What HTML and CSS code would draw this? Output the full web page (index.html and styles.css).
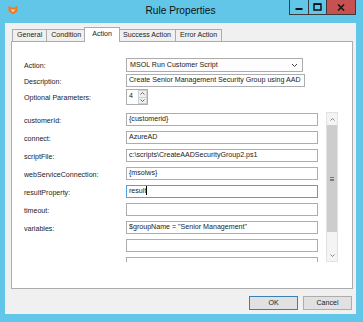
FILE: index.html
```html
<!DOCTYPE html>
<html lang="en">
<head>
    <meta charset="UTF-8">
    <title>Rule Properties</title>
    <link rel="stylesheet" href="styles.css">
</head>
<body>
    <div class="window">
        <div class="titlebar">
            <svg class="app-icon" width="10" height="10" viewBox="0 0 10 10">
                <path d="M0.5 0.5 L3.2 2.6 H6.8 L9.5 0.5 V6 L5 9.6 L0.5 6 Z" fill="#f07a22"/>
                <path d="M2.6 4.4 H7.4 L5 7.2 Z" fill="#fbd0a8"/>
            </svg>
            <div class="title">Rule Properties</div>
            <div class="caption-buttons">
                <span class="cap">
                    <svg width="8" height="8" viewBox="0 0 8 8"><rect x="0.5" y="5" width="7" height="2" fill="#111"/></svg>
                </span>
                <span class="cap">
                    <svg width="9" height="8" viewBox="0 0 9 8"><rect x="1" y="1" width="7" height="6" fill="none" stroke="#111" stroke-width="1.5"/><rect x="1" y="0.5" width="7" height="1.5" fill="#111"/></svg>
                </span>
                <span class="cap close">
                    <svg width="8" height="7" viewBox="0 0 8 7"><path d="M1 0.5 L7 6.5 M7 0.5 L1 6.5" stroke="#1a1a1a" stroke-width="1.6"/></svg>
                </span>
            </div>
        </div>

        <div class="client">
            <div class="tabs">
                <div class="tab">General</div>
                <div class="tab">Condition</div>
                <div class="tab active">Action</div>
                <div class="tab">Success Action</div>
                <div class="tab">Error Action</div>
            </div>

            <div class="panel">
                <div class="form">
                    <label>Action:</label>
                    <div class="combo">
                        <span>MSOL Run Customer Script</span>
                        <svg width="7" height="5" viewBox="0 0 7 5"><path d="M1 1 L3.5 3.5 L6 1" fill="none" stroke="#444" stroke-width="1"/></svg>
                    </div>

                    <label>Description:</label>
                    <div class="textbox desc">Create Senior Management Security Group using AAD</div>

                    <label>Optional Parameters:</label>
                    <div class="spin">
                        <span class="spin-value">4</span>
                        <div class="spin-buttons">
                            <span class="spin-btn"><svg width="5" height="3" viewBox="0 0 5 3"><path d="M0.5 2.5 L2.5 0.5 L4.5 2.5" fill="none" stroke="#555" stroke-width="0.9"/></svg></span>
                            <span class="spin-btn"><svg width="5" height="3" viewBox="0 0 5 3"><path d="M0.5 0.5 L2.5 2.5 L4.5 0.5" fill="none" stroke="#555" stroke-width="0.9"/></svg></span>
                        </div>
                    </div>
                </div>

                <div class="scroll">
                    <div class="scroll-rows">
                        <label>customerId:</label>
                        <div class="textbox">{customerid}</div>
                        <label>connect:</label>
                        <div class="textbox">AzureAD</div>
                        <label>scriptFile:</label>
                        <div class="textbox">c:\scripts\CreateAADSecurityGroup2.ps1</div>
                        <label>webServiceConnection:</label>
                        <div class="textbox">{msolws}</div>
                        <label>resultProperty:</label>
                        <div class="textbox focused">result<span class="caret"></span></div>
                        <label>timeout:</label>
                        <div class="textbox"></div>
                        <label>variables:</label>
                        <div class="textbox">$groupName = "Senior Management"</div>
                        <label></label>
                        <div class="textbox"></div>
                        <label></label>
                        <div class="textbox"></div>
                    </div>
                    <div class="scrollbar">
                        <span class="sb-btn"><svg width="5" height="3" viewBox="0 0 5 3"><path d="M0.5 2.5 L2.5 0.5 L4.5 2.5" fill="none" stroke="#777" stroke-width="0.9"/></svg></span>
                        <div class="sb-thumb"><span class="grip"></span></div>
                        <div class="sb-track"></div>
                        <span class="sb-btn"><svg width="5" height="3" viewBox="0 0 5 3"><path d="M0.5 0.5 L2.5 2.5 L4.5 0.5" fill="none" stroke="#777" stroke-width="0.9"/></svg></span>
                    </div>
                </div>
            </div>

            <div class="buttons">
                <button class="default">OK</button>
                <button>Cancel</button>
            </div>
        </div>
    </div>
</body>
</html>
```

FILE: styles.css
```css
* {
    box-sizing: border-box;
}
body {
    margin: 0;
    font-family: "Liberation Sans", Arial, sans-serif;
    font-size: 7.1px;
    color: #222;
}
.window {
    width: 363px;
    height: 322px;
    background: #62c6e8;
    padding: 0 7px 8px 5px;
    display: flex;
    flex-direction: column;
}
.titlebar {
    height: 23px;
    flex: 0 0 23px;
    display: grid;
    grid-template-columns: 1fr auto 1fr;
    align-items: start;
}
.app-icon {
    margin: 5px 0 0 3px;
}
.title {
    font-size: 10.2px;
    line-height: 22px;
    color: #111;
}
.caption-buttons {
    justify-self: end;
    display: flex;
    height: 15px;
}
.cap {
    width: 20px;
    height: 15px;
    border: 1px solid #3a3a3a;
    border-top: none;
    display: flex;
    align-items: center;
    justify-content: center;
}
.cap + .cap {
    margin-left: -1px;
    width: 19px;
}
.cap.close {
    width: 30px;
    background: #c75050;
}
.client {
    flex: 1;
    background: #f0f0f0;
    padding: 4px 3px 4px 6px;
    display: flex;
    flex-direction: column;
}
.tabs {
    height: 14px;
    display: flex;
    align-items: flex-end;
    padding-left: 1px;
}
.tab {
    height: 12px;
    line-height: 11px;
    padding: 0 4px;
    border: 1px solid #acacac;
    border-bottom: none;
    background: #f0f0f0;
    white-space: nowrap;
}
.tab + .tab {
    margin-left: -1px;
}
.tab.active {
    height: 15px;
    line-height: 12px;
    padding: 0 7px;
    margin: 0 -2px -1px -2px;
    background: #fff;
    position: relative;
    z-index: 1;
}
.tab.active + .tab {
    margin-left: 0;
}
.panel {
    height: 248px;
    background: #fff;
    border: 1px solid #acacac;
    padding: 16px 0 0 12px;
}
.form {
    display: grid;
    grid-template-columns: 102px max-content;
    row-gap: 2px;
    align-items: center;
}
label {
    white-space: nowrap;
    padding-top: 2px;
}
.combo {
    width: 177px;
    height: 14px;
    border: 1px solid #acacac;
    background: #fdfdfd;
    display: flex;
    align-items: center;
    justify-content: space-between;
    padding: 0 4px 0 3px;
}
.textbox {
    width: 192px;
    height: 13px;
    border: 1px solid #abadb3;
    background: #fff;
    padding: 0 2px;
    line-height: 11px;
    white-space: nowrap;
    overflow: hidden;
}
.textbox.desc {
    width: 179px;
}
.textbox.focused {
    border-color: #569de5;
}
.caret {
    display: inline-block;
    width: 1px;
    height: 9px;
    background: #000;
    vertical-align: -2px;
}
.spin {
    width: 22px;
    height: 16px;
    border: 1px solid #abadb3;
    background: #fff;
    display: flex;
    justify-content: space-between;
}
.spin-value {
    padding: 2px 0 0 2px;
}
.spin-buttons {
    display: flex;
    flex-direction: column;
    width: 9px;
}
.spin-btn {
    flex: 1;
    background: #f0f0f0;
    border: 1px solid #d0d0d0;
    display: flex;
    align-items: center;
    justify-content: center;
}
.spin-btn + .spin-btn {
    border-top: none;
}
.scroll {
    display: flex;
    height: 150px;
    margin-top: 7px;
}
.scroll-rows {
    width: 294px;
    height: 150px;
    overflow: hidden;
    padding-top: 1px;
    display: grid;
    grid-template-columns: 102px 192px;
    grid-auto-rows: 13px;
    row-gap: 5px;
    align-items: center;
    align-content: start;
}
.scrollbar {
    width: 12px;
    margin-left: 8px;
    display: flex;
    flex-direction: column;
    background: #f4f4f4;
    border: 1px solid #e2e2e2;
}
.sb-btn {
    height: 12px;
    display: flex;
    align-items: center;
    justify-content: center;
}
.sb-thumb {
    height: 107px;
    background: #cdcdcd;
    display: flex;
    align-items: center;
    justify-content: center;
}
.grip {
    width: 4px;
    height: 4px;
    border-top: 1px solid #7a7a7a;
    border-bottom: 1px solid #7a7a7a;
    background: linear-gradient(#cdcdcd 1px, #7a7a7a 1px, #7a7a7a 2px, #cdcdcd 2px);
}
.sb-track {
    flex: 1;
}
.buttons {
    display: flex;
    justify-content: flex-end;
    gap: 5px;
    margin-top: 7px;
    padding-right: 1px;
}
button {
    width: 49px;
    height: 14px;
    padding: 0;
    font-family: inherit;
    font-size: 7.1px;
    color: #222;
    background: #e1e1e1;
    border: 1px solid #adadad;
}
button.default {
    border-color: #3c7fb1;
}
```
